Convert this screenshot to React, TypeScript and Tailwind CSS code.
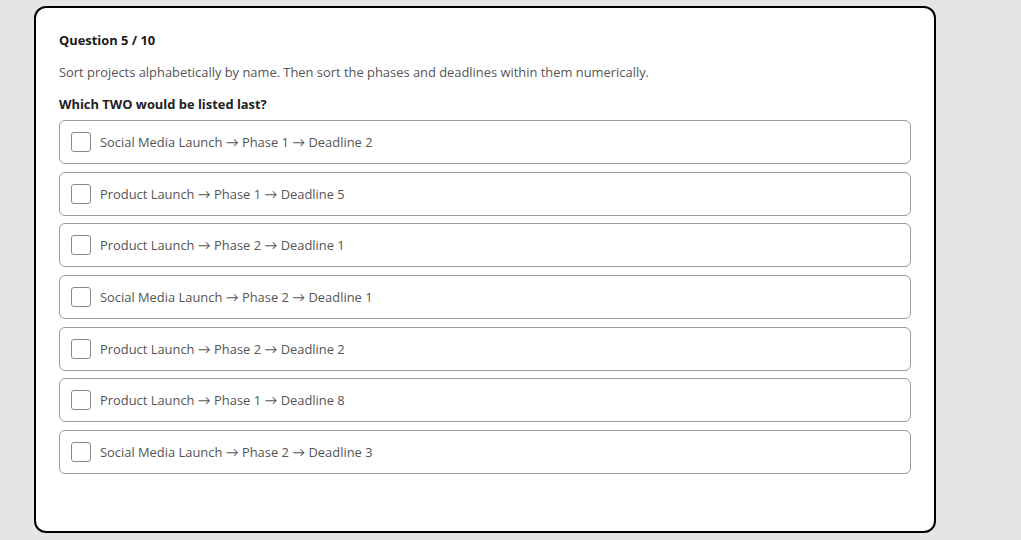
import React from "react";

const options = [
  ["Social Media Launch", "Phase 1", "Deadline 2"],
  ["Product Launch", "Phase 1", "Deadline 5"],
  ["Product Launch", "Phase 2", "Deadline 1"],
  ["Social Media Launch", "Phase 2", "Deadline 1"],
  ["Product Launch", "Phase 2", "Deadline 2"],
  ["Product Launch", "Phase 1", "Deadline 8"],
  ["Social Media Launch", "Phase 2", "Deadline 3"],
];

function Arrow() {
  return <span className="font-['Lato',sans-serif]">→</span>;
}

export default function App() {
  return (
    <div className="w-[1021px] h-[540px] bg-[#e5e5e5] pt-[6px] pl-[34px] overflow-hidden font-['Open_Sans','Liberation_Sans',sans-serif]">
      <div className="w-[902px] h-[527px] bg-white border-2 border-black rounded-[12px] px-[23px] pt-[23px]">
        <div className="text-[12.9px] leading-[18px] font-bold text-[#1a1a1a]">Question 5 / 10</div>
        <div className="mt-[14px] text-[12.9px] leading-[18px] text-[#555]">
          Sort projects alphabetically by name. Then sort the phases and deadlines within them numerically.
        </div>
        <div className="mt-[14px] text-[12.9px] leading-[18px] font-bold text-[#222]">
          Which TWO would be listed last?
        </div>
        <div className="mt-[7px] flex flex-col gap-[7.67px]">
          {options.map((o, i) => (
            <label
              key={i}
              className="h-[44px] flex items-center gap-[9px] pl-[11px] border border-[#9a9a9a] rounded-[6px] cursor-pointer"
            >
              <span className="w-[20px] h-[20px] border border-[#8a8a8a] rounded-[3px] bg-white shrink-0" />
              <span className="text-[12.9px] leading-[18px] text-[#555]">
                {o[0]} <Arrow /> {o[1]} <Arrow /> {o[2]}
              </span>
            </label>
          ))}
        </div>
      </div>
    </div>
  );
}
